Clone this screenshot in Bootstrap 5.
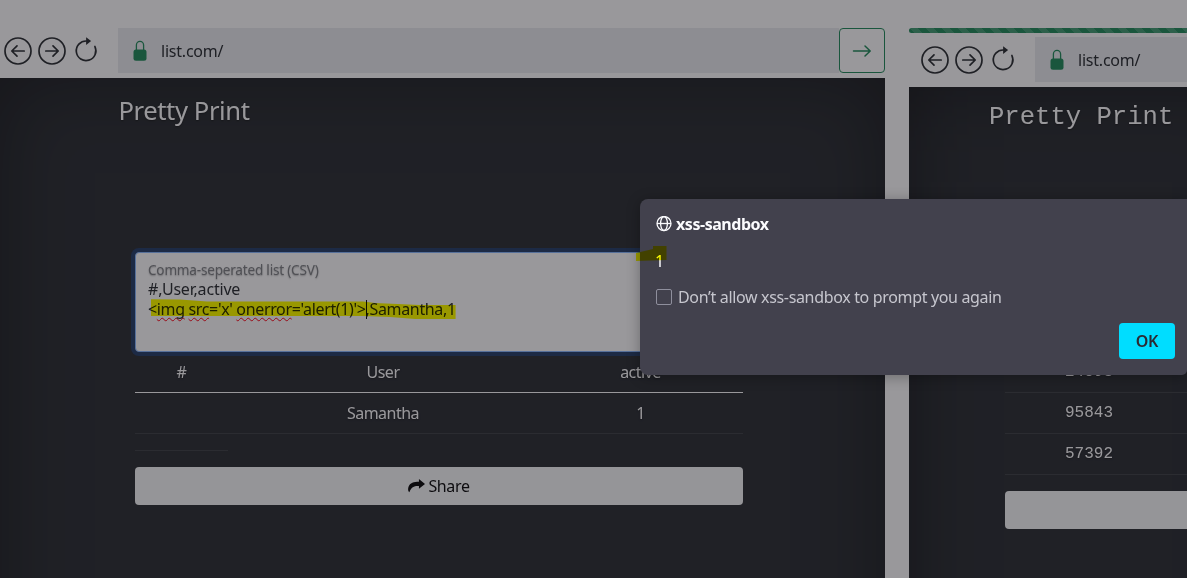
<!DOCTYPE html>
<html lang="en">
<head>
<meta charset="utf-8">
<title>xss-sandbox</title>
<link href="https://cdn.jsdelivr.net/npm/bootstrap@5.3.0/dist/css/bootstrap.min.css" rel="stylesheet">
<style>
body{font-family:"Noto Sans",sans-serif;height:578px;overflow:hidden;background:#fff;font-size:16px}
.stage{width:100%;height:578px;position:relative;overflow:hidden}
.panes{height:680px;padding-top:28px;gap:24px}
.pane-left{width:885px;flex:none}
.pane-right{width:278px;flex:none;overflow:hidden}
.toolbar-row{height:45px;margin-bottom:5px}
.tools{width:118px;padding-left:4px;gap:6px;flex:none}
.address{background:#e9ecef;padding-left:15px;color:#212529;letter-spacing:-.22px}
.address span{margin-left:14px}
.go{width:46px;height:45px;border:1px solid #198754;border-radius:4px;padding:0;color:#198754;flex:none}
.viewport{background:#23272b;color:#fff;box-shadow:inset 0 0 5rem rgba(0,0,0,.5);text-shadow:0 .05rem .1rem rgba(0,0,0,.5)}
.pane-right .viewport{box-shadow:inset 5rem 0 5rem -5rem rgba(0,0,0,.5),inset 0 5rem 5rem -5rem rgba(0,0,0,.5)}
.head-title{font-size:25.6px;line-height:32px;font-weight:400;margin:0}
.pane-left .head-title{padding:17px 0 0 118.5px;letter-spacing:-.4px}
.pane-right .head-title{padding:15px 0 0 80px}
.mono{font-family:"Liberation Mono",monospace}
.content{width:608px;margin-left:135px}
.csv{height:100px;margin-top:125px;padding:7px 12px;border:1px solid #86b7fe;border-radius:4px;background:#fff;box-shadow:0 0 0 4px #1d3763;color:#212529;line-height:20px;text-shadow:none;white-space:pre;letter-spacing:-.35px}
.csv-label{font-size:13.6px;line-height:19px;color:#7a7d80;text-shadow:0 .05rem .1rem rgba(0,0,0,.3);letter-spacing:-.22px}
.csv-head{letter-spacing:-.2px}
.typo{text-decoration:underline wavy #ff0010 1px;text-underline-offset:2px;text-decoration-skip-ink:none}
.caret{display:inline-block;width:1px;height:19px;margin-right:-1px;background:#000;vertical-align:-4px}
.grid-table{--bs-table-color:#fff;--bs-table-bg:transparent;color:#fff;table-layout:fixed;margin:0;text-align:center}
.pane-left .grid-table{letter-spacing:-.5px}
.grid-table td,.grid-table th{height:41px;padding:8px;line-height:24px;font-weight:400;border-bottom:1px solid #373b3e;color:#fff}
.grid-table th{border-bottom-color:#fff;padding-top:7px;height:40px}
.grid-table .short td{height:17px;padding:0;line-height:0}
.share{background:#f8f9fa;border-radius:4px;height:38px;color:#000;text-shadow:none;margin-top:16px;padding:0;letter-spacing:-.35px}
.share svg{margin-right:3px}
.dim{position:absolute;inset:0;background:rgba(28,27,34,.45)}
.prompt-box{position:absolute;left:640px;top:199px;width:547px;height:176px;background:#42414d;color:#fbfbfe;border-radius:8px 0 5px 8px;padding:16px;box-shadow:0 2px 14px rgba(0,0,0,.3)}
.prompt-title{font-weight:700;line-height:18px;height:18px;gap:4px;letter-spacing:-.45px}
.prompt-msg{line-height:20px;margin-top:18px;height:20px;letter-spacing:-.3px}
.prompt-msg span{position:relative;left:-1px}
.check-text{line-height:20px;color:#c6c6ce;letter-spacing:-.34px}
.tick{width:16px;height:16px;border:1px solid #8f8f9d;border-radius:2px;margin-right:6px}
.ok{position:absolute;left:479px;top:124px;width:56px;height:36px;background:#0df;color:#2b2a33;border-radius:4px;font-weight:600;font-size:16px;letter-spacing:-.3px;padding:0}
.marker{position:absolute;inset:0;mix-blend-mode:multiply;pointer-events:none}
</style>
</head>
<body>
<svg class="d-none">
  <symbol id="back" viewBox="0 0 28 28"><g fill="none" stroke="#212529" stroke-width="1.7" stroke-linecap="round" stroke-linejoin="round"><circle cx="14" cy="14" r="13"/><path d="M20.2 14H8M13 8.8 7.8 14l5.2 5.2"/></g></symbol>
  <symbol id="fwd" viewBox="0 0 28 28"><g fill="none" stroke="#212529" stroke-width="1.7" stroke-linecap="round" stroke-linejoin="round"><circle cx="14" cy="14" r="13"/><path d="M7.8 14H20M15 8.8l5.2 5.2-5.2 5.2"/></g></symbol>
  <symbol id="reload" viewBox="0 0 28 28"><path d="M14.500 4A9.800 9.800 0 1 0 22.900 9.500" fill="none" stroke="#212529" stroke-width="1.7" stroke-linecap="round"/><path d="M14.100.3v7.600l5-3.800z" fill="#212529"/></symbol>
  <symbol id="lock" viewBox="0 0 14 22"><rect x=".5" y="9.5" width="13" height="11.3" rx="2.5" fill="#198754"/><path d="M3.400 10V5a3.600 3.600 0 0 1 7.200 0v5" fill="none" stroke="#198754" stroke-width="1.3"/></symbol>
</svg>
<div class="stage">
  <div class="panes d-flex">
    <section class="pane-left d-flex flex-column">
      <div class="toolbar-row d-flex">
        <div class="tools d-flex align-items-center">
          <svg width="28" height="28"><use href="#back"/></svg><svg width="28" height="28"><use href="#fwd"/></svg><svg width="28" height="28"><use href="#reload"/></svg>
        </div>
        <div class="address flex-grow-1 d-flex align-items-center"><svg width="14" height="22"><use href="#lock"/></svg><span>list.com/</span></div>
        <button class="go btn d-flex align-items-center justify-content-center"><svg width="20" height="14" viewBox="0 0 20 14" fill="none" stroke="#198754" stroke-width="1.5" stroke-linecap="round" stroke-linejoin="round"><path d="M1.500 7H18M13 2l5.200 5-5.200 5"/></svg></button>
      </div>
      <div class="viewport flex-grow-1">
        <h3 class="head-title">Pretty Print</h3>
        <div class="content">
          <div class="csv"><div class="csv-label">Comma-seperated list (CSV)</div><div class="csv-head">#,User,active</div><div>&lt;<span class="typo">img</span> <span class="typo">src</span>='x' <span class="typo">onerror</span>='alert(1)'&gt;<span class="caret"></span>,Samantha,1</div></div>
          <table class="grid-table table">
            <colgroup><col style="width:93px"><col style="width:310px"><col style="width:205px"></colgroup>
            <thead><tr><th>#</th><th>User</th><th>active</th></tr></thead>
            <tbody><tr><td></td><td>Samantha</td><td>1</td></tr><tr class="short"><td></td></tr></tbody>
          </table>
          <button class="share btn w-100 d-flex align-items-center justify-content-center"><svg width="17" height="16" viewBox="0 0 16 16" preserveAspectRatio="none"><path d="M10.300 1 16 5.900l-5.700 4.900V8C6.200 7.700 3.200 8.700 1.300 14.200 0 13.200-.2 10.900.5 8.800 1.800 5 5.500 3.800 10.300 3.800z"/></svg>Share</button>
        </div>
      </div>
    </section>
    <section class="pane-right d-flex flex-column">
      <div class="progress rounded-0 rounded-start" style="height:5px;margin-bottom:4px"><div class="progress-bar progress-bar-striped bg-success w-100"></div></div>
      <div class="toolbar-row d-flex">
        <div class="tools d-flex align-items-center ps-2 w-auto" style="min-width:126px">
          <svg class="ms-1" width="28" height="28"><use href="#back"/></svg><svg width="28" height="28"><use href="#fwd"/></svg><svg width="28" height="28"><use href="#reload"/></svg>
        </div>
        <div class="address flex-grow-1 d-flex align-items-center"><svg width="14" height="22"><use href="#lock"/></svg><span>list.com/</span></div>
      </div>
      <div class="viewport mono flex-grow-1">
        <h3 class="head-title text-nowrap">Pretty Print</h3>
        <div class="content w-auto" style="margin-left:96px;padding-top:135px">
          <table class="grid-table table">
            <colgroup><col style="width:168px"><col></colgroup>
            <tbody><tr><td></td><td></td></tr><tr><td></td><td></td></tr><tr><td>24893</td><td></td></tr><tr><td>95843</td><td></td></tr><tr><td>57392</td><td></td></tr></tbody>
          </table>
          <div class="share rounded-end-0"></div>
        </div>
      </div>
    </section>
  </div>
  <div class="dim"></div>
  <div class="prompt-box">
    <div class="prompt-title d-flex align-items-center"><svg width="16" height="16" viewBox="0 0 16 16" fill="none" stroke="#fbfbfe" stroke-width="1.3"><circle cx="8" cy="7.500" r="7"/><ellipse cx="8" cy="7.500" rx="3.400" ry="7"/><path d="M1 7.500h14"/></svg><span>xss-sandbox</span></div>
    <div class="prompt-msg"><span>1</span></div>
    <div class="d-flex align-items-center mt-3"><span class="tick"></span><span class="check-text">Don’t allow xss-sandbox to prompt you again</span></div>
    <button class="ok btn">OK</button>
  </div>
  <svg class="marker" width="1187" height="578" fill="#ff0"><path d="M151 299.300 180 299.500 207 301.500H363L375 303 420 305H455.600V319H415L390 317 363 316H151zM636 253 653 249V246H666.500V260L636 261z"/></svg>
</div>
<script src="https://cdn.jsdelivr.net/npm/bootstrap@5.3.0/dist/js/bootstrap.bundle.min.js"></script>
</body>
</html>
